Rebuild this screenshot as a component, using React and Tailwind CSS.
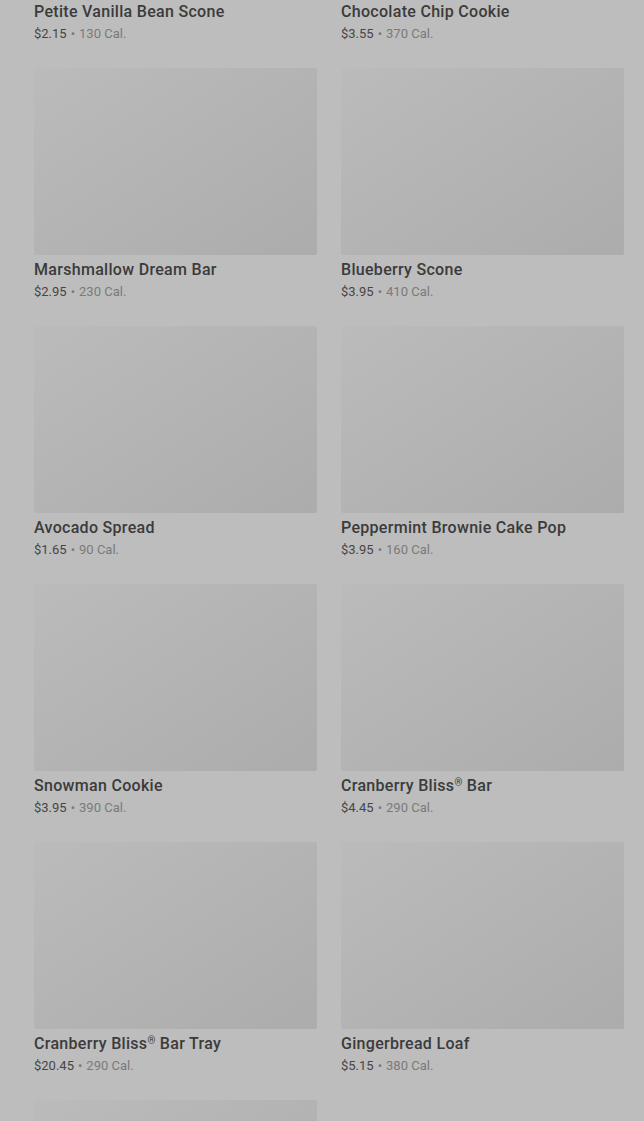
import React from 'react';

const items = [
  { name: 'Petite Vanilla Bean Scone', price: '$2.15', cal: '130 Cal.' },
  { name: 'Chocolate Chip Cookie', price: '$3.55', cal: '370 Cal.' },
  { name: 'Marshmallow Dream Bar', price: '$2.95', cal: '230 Cal.' },
  { name: 'Blueberry Scone', price: '$3.95', cal: '410 Cal.' },
  { name: 'Avocado Spread', price: '$1.65', cal: '90 Cal.' },
  { name: 'Peppermint Brownie Cake Pop', price: '$3.95', cal: '160 Cal.' },
  { name: 'Snowman Cookie', price: '$3.95', cal: '390 Cal.' },
  { name: 'Cranberry Bliss', reg: true, rest: ' Bar', price: '$4.45', cal: '290 Cal.' },
  { name: 'Cranberry Bliss', reg: true, rest: ' Bar Tray', price: '$20.45', cal: '290 Cal.' },
  { name: 'Gingerbread Loaf', price: '$5.15', cal: '380 Cal.' },
];

const Card = ({ item }) => (
  <div className="flex flex-col">
    <div className="h-[187px] rounded-[2px] bg-gradient-to-br from-[#bbbbbb] to-[#acacac]" />
    <div className="mt-[5px] h-[20px] text-[16px] leading-[20px] font-medium text-[#3b3b3b] tracking-[0.3px]">
      {item.name}
      {item.reg && <span className="relative -top-[5px] text-[10px] leading-none">®</span>}
      {item.rest}
    </div>
    <div className="mt-[3px] text-[13px] leading-[18px] text-[#7a7a7a]">
      <span className="text-[#464646]">{item.price}</span>
      <span className="mx-[4px]">•</span>
      {item.cal}
    </div>
  </div>
);

export default function App() {
  return (
    <div className="h-[1121px] overflow-hidden bg-[#bdbdbd]" style={{ fontFamily: 'Roboto, "Liberation Sans", sans-serif' }}>
      <div className="-mt-[190px] pl-[34px] pr-[20px] grid grid-cols-2 gap-x-[24px] gap-y-[25px]">
        {items.map((item, i) => (
          <Card key={i} item={item} />
        ))}
        <div className="h-[187px] rounded-[2px] bg-gradient-to-br from-[#bbbbbb] to-[#acacac]" />
      </div>
    </div>
  );
}
